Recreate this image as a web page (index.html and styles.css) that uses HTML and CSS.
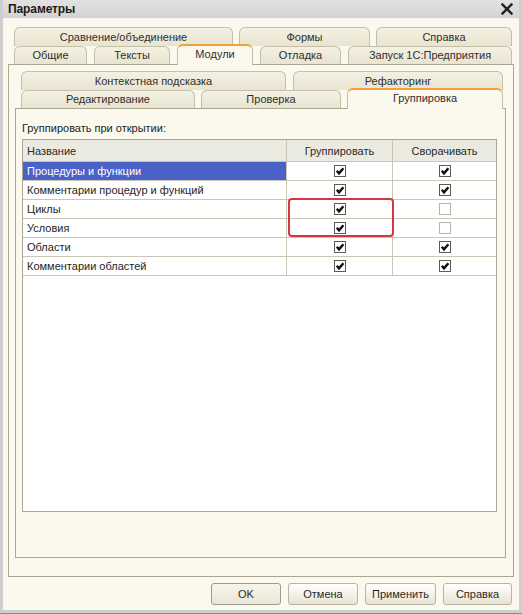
FILE: index.html
```html
<!DOCTYPE html>
<html lang="ru">
<head>
<meta charset="utf-8">
<title>Параметры</title>
<link rel="stylesheet" href="styles.css">
</head>
<body>
<div class="window">
  <div class="titlebar">
    <span class="title">Параметры</span>
    <svg class="close" width="12" height="12" viewBox="0 0 12 12"><path d="M1.5 1.5 L10.5 10.5 M10.5 1.5 L1.5 10.5" stroke="#222" stroke-width="2.4" stroke-linecap="square"/></svg>
  </div>
  <div class="client">
    <div class="tabset outer-tabs">
      <div class="tabrow back o-back">
        <div class="tab">Сравнение/объединение</div>
        <div class="tab">Формы</div>
        <div class="tab">Справка</div>
      </div>
      <div class="tabrow front o-front">
        <div class="tab">Общие</div>
        <div class="tab">Тексты</div>
        <div class="tab active">Модули</div>
        <div class="tab">Отладка</div>
        <div class="tab">Запуск 1С:Предприятия</div>
      </div>
    </div>
    <div class="panel outer-panel">
      <div class="tabset inner-tabs">
        <div class="tabrow back i-back">
          <div class="tab">Контекстная подсказка</div>
          <div class="tab">Рефакторинг</div>
        </div>
        <div class="tabrow front i-front">
          <div class="tab">Редактирование</div>
          <div class="tab">Проверка</div>
          <div class="tab active">Группировка</div>
        </div>
      </div>
      <div class="panel inner-panel">
        <div class="caption">Группировать при открытии:</div>
        <div class="grid">
          <div class="row head">
            <div class="cell name">Название</div>
            <div class="cell">Группировать</div>
            <div class="cell">Сворачивать</div>
          </div>
          <div class="row selected">
            <div class="cell name">Процедуры и функции</div>
            <div class="cell"><span class="cb on"><svg viewBox="0 0 10 10"><path d="M1.8 4.8 L4 7.4 L8.4 2.2" /></svg></span></div>
            <div class="cell"><span class="cb on"><svg viewBox="0 0 10 10"><path d="M1.8 4.8 L4 7.4 L8.4 2.2" /></svg></span></div>
          </div>
          <div class="row">
            <div class="cell name">Комментарии процедур и функций</div>
            <div class="cell"><span class="cb on"><svg viewBox="0 0 10 10"><path d="M1.8 4.8 L4 7.4 L8.4 2.2" /></svg></span></div>
            <div class="cell"><span class="cb on"><svg viewBox="0 0 10 10"><path d="M1.8 4.8 L4 7.4 L8.4 2.2" /></svg></span></div>
          </div>
          <div class="row">
            <div class="cell name">Циклы</div>
            <div class="cell"><span class="cb on"><svg viewBox="0 0 10 10"><path d="M1.8 4.8 L4 7.4 L8.4 2.2" /></svg></span></div>
            <div class="cell"><span class="cb off"></span></div>
          </div>
          <div class="row">
            <div class="cell name">Условия</div>
            <div class="cell"><span class="cb on"><svg viewBox="0 0 10 10"><path d="M1.8 4.8 L4 7.4 L8.4 2.2" /></svg></span></div>
            <div class="cell"><span class="cb off"></span></div>
          </div>
          <div class="row">
            <div class="cell name">Области</div>
            <div class="cell"><span class="cb on"><svg viewBox="0 0 10 10"><path d="M1.8 4.8 L4 7.4 L8.4 2.2" /></svg></span></div>
            <div class="cell"><span class="cb on"><svg viewBox="0 0 10 10"><path d="M1.8 4.8 L4 7.4 L8.4 2.2" /></svg></span></div>
          </div>
          <div class="row">
            <div class="cell name">Комментарии областей</div>
            <div class="cell"><span class="cb on"><svg viewBox="0 0 10 10"><path d="M1.8 4.8 L4 7.4 L8.4 2.2" /></svg></span></div>
            <div class="cell"><span class="cb on"><svg viewBox="0 0 10 10"><path d="M1.8 4.8 L4 7.4 L8.4 2.2" /></svg></span></div>
          </div>
          <div class="highlight"></div>
        </div>
      </div>
    </div>
    <div class="buttons">
      <button class="btn default">OK</button>
      <button class="btn">Отмена</button>
      <button class="btn">Применить</button>
      <button class="btn">Справка</button>
    </div>
  </div>
</div>
</body>
</html>
```

FILE: styles.css
```css
* { box-sizing: border-box; }
html, body { margin: 0; padding: 0; }
body {
  width: 522px;
  height: 614px;
  overflow: hidden;
  background: #d4d4d4;
  font-family: "Liberation Sans", Arial, sans-serif;
  font-size: 11px;
  color: #1e1e1e;
}
.window {
  width: 522px;
  height: 614px;
  background: #cfcfcf;
  border-bottom: 1px solid #8c8c8c;
  padding: 0 3px 3px 3px;
  display: flex;
  flex-direction: column;
}
.titlebar {
  height: 19px;
  display: flex;
  align-items: center;
  justify-content: space-between;
  padding: 0 5px 0 5px;
  background: linear-gradient(#e2e2e2, #d3d3d3);
  border-bottom: 1px solid #f2f2f2;
}
.title { font-weight: bold; font-size: 12px; color: #1a1a1a; letter-spacing: -0.1px; }
.close { display: block; margin-right: 1px; }
.client {
  flex: 1;
  background: #fbf9ee;
  border-left: 1px solid #f4f4f4;
  padding: 8px 5px 0 4px;
  display: flex;
  flex-direction: column;
}
.tabset { display: flex; flex-direction: column; }
.tabrow { display: grid; }
.tab {
  border: 1px solid #c3bfaa;
  border-bottom: none;
  border-radius: 6px 6px 0 0;
  background: linear-gradient(#f4f1e3, #e8e4d0);
  text-align: center;
  color: #2e2e2e;
  line-height: 16px;
}
.back .tab { height: 19px; padding-top: 1px; }
.front .tab { height: 18px; padding-top: 0; position: relative; }
.front .tab.active {
  background: #fbf9ee;
  border-color: #c3bfaa;
  border-top: 2px solid #f2a23c;
  height: 21px;
  margin-top: -2px;
  z-index: 2;
}
.outer-tabs { padding-left: 6px; }
.o-back { grid-template-columns: 219px 131px 136px; column-gap: 6px; }
.o-front { grid-template-columns: 73px 76px 76px 81px 164px; column-gap: 7px; }
.inner-tabs { padding-left: 6px; }
.i-back { grid-template-columns: 265px 210px; column-gap: 7px; }
.i-front { grid-template-columns: 174px 140px 156px; column-gap: 6px; }
.panel {
  border: 1px solid #a9a692;
  background: #fbf9ee;
  position: relative;
  z-index: 1;
}
.outer-panel {
  height: 513px;
  margin-top: -1px;
  padding: 6px 7px 0 6px;
}
.inner-panel {
  height: 450px;
  margin-top: -1px;
  padding: 12px 8px 0 6px;
}
.caption { height: 18px; line-height: 14px; color: #222; }
.grid {
  position: relative;
  height: 373px;
  border: 1px solid #a9a692;
  background: #ffffff;
}
.row {
  display: grid;
  grid-template-columns: 264px 106px 1fr;
  height: 19px;
  border-bottom: 1px solid #c9c6b6;
}
.row.head { height: 22px; background: #ebeae1; }
.cell {
  display: flex;
  align-items: center;
  justify-content: center;
  border-right: 1px solid #c9c6b6;
  white-space: nowrap;
  overflow: hidden;
}
.cell:last-child { border-right: none; }
.cell.name { justify-content: flex-start; padding-left: 4px; }
.head .cell { color: #2a2a2a; }
.row.selected .cell.name { background: #4a62c7; color: #ffffff; }
.cb {
  width: 12px;
  height: 12px;
  border: 1px solid #5a5a5a;
  background: #fff;
  display: block;
}
.cb svg { width: 10px; height: 10px; display: block; }
.cb svg path { fill: none; stroke: #111; stroke-width: 2.4; }
.cb.off { border-color: #b4b4b4; }
.highlight {
  position: absolute;
  left: 265px;
  top: 58px;
  width: 106px;
  height: 39px;
  border: 2px solid #d8363e;
  border-radius: 4px;
  pointer-events: none;
}
.buttons {
  display: flex;
  justify-content: flex-end;
  gap: 7px;
  padding: 6px 2px 0 0;
}
.btn {
  font-family: "Liberation Sans", Arial, sans-serif;
  font-size: 11px;
  color: #2a2a2a;
  height: 22px;
  padding: 0;
  border: 1px solid #b7b4a2;
  border-radius: 3px;
  background: linear-gradient(#ffffff, #f1efe3 60%, #e6e3d3);
}
.btn:nth-child(1) { width: 70px; }
.btn:nth-child(2) { width: 70px; }
.btn:nth-child(3) { width: 71px; }
.btn:nth-child(4) { width: 69px; }
.btn.default { border-color: #9e9b88; background: linear-gradient(#f7f5ea, #e9e6d6); }
```
